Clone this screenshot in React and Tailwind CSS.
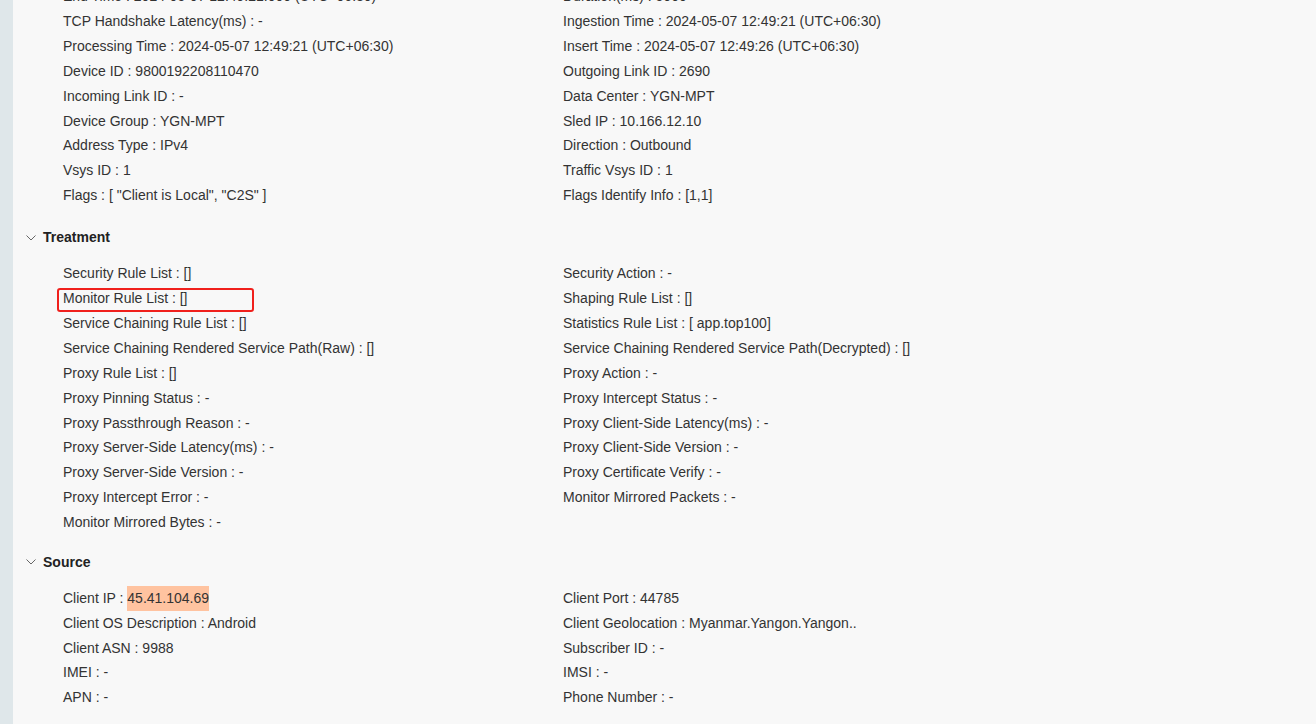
import React from "react";

const general = [
  ["End Time : 2024-05-07 12:49:21.000 (UTC+06:30)", "Duration(ms) : 5000"],
  ["TCP Handshake Latency(ms) : -", "Ingestion Time : 2024-05-07 12:49:21 (UTC+06:30)"],
  ["Processing Time : 2024-05-07 12:49:21 (UTC+06:30)", "Insert Time : 2024-05-07 12:49:26 (UTC+06:30)"],
  ["Device ID : 9800192208110470", "Outgoing Link ID : 2690"],
  ["Incoming Link ID : -", "Data Center : YGN-MPT"],
  ["Device Group : YGN-MPT", "Sled IP : 10.166.12.10"],
  ["Address Type : IPv4", "Direction : Outbound"],
  ["Vsys ID : 1", "Traffic Vsys ID : 1"],
  ['Flags : [ "Client is Local", "C2S" ]', "Flags Identify Info : [1,1]"],
];

const treatment = [
  ["Security Rule List : []", "Security Action : -"],
  ["Monitor Rule List : []", "Shaping Rule List : []"],
  ["Service Chaining Rule List : []", "Statistics Rule List : [ app.top100]"],
  ["Service Chaining Rendered Service Path(Raw) : []", "Service Chaining Rendered Service Path(Decrypted) : []"],
  ["Proxy Rule List : []", "Proxy Action : -"],
  ["Proxy Pinning Status : -", "Proxy Intercept Status : -"],
  ["Proxy Passthrough Reason : -", "Proxy Client-Side Latency(ms) : -"],
  ["Proxy Server-Side Latency(ms) : -", "Proxy Client-Side Version : -"],
  ["Proxy Server-Side Version : -", "Proxy Certificate Verify : -"],
  ["Proxy Intercept Error : -", "Monitor Mirrored Packets : -"],
  ["Monitor Mirrored Bytes : -", null],
];

const source = [
  ["__IP__", "Client Port : 44785"],
  ["Client OS Description : Android", "Client Geolocation : Myanmar.Yangon.Yangon.."],
  ["Client ASN : 9988", "Subscriber ID : -"],
  ["IMEI : -", "IMSI : -"],
  ["APN : -", "Phone Number : -"],
];

function Cell({ text }) {
  if (text === null) return <div className="h-[24.85px]" />;
  if (text === "__IP__") {
    return (
      <div className="h-[24.85px] leading-[24.85px] whitespace-nowrap">
        Client IP :{" "}
        <span className="inline-block bg-[#ffc3a0] h-[24.85px]">45.41.104.69</span>
      </div>
    );
  }
  if (text === "Monitor Rule List : []") {
    return (
      <div className="relative h-[24.85px] leading-[24.85px] whitespace-nowrap">
        {text}
        <span className="absolute left-[-6px] top-[1.5px] w-[197px] h-[24px] border-2 border-[#f0201c] rounded-[3px]" />
      </div>
    );
  }
  return <div className="h-[24.85px] leading-[24.85px] whitespace-nowrap">{text}</div>;
}

function Rows({ rows }) {
  return (
    <div className="grid grid-cols-[500px_500px] pl-[50px]">
      {rows.map(([a, b], i) => (
        <React.Fragment key={i}>
          <Cell text={a} />
          <Cell text={b} />
        </React.Fragment>
      ))}
    </div>
  );
}

function Heading({ title }) {
  return (
    <div className="flex items-center h-[28px] pl-[13px] gap-[7px]">
      <svg width="10" height="6" viewBox="0 0 10 6" className="shrink-0">
        <path d="M0.5 0.5 L5 5 L9.5 0.5" fill="none" stroke="#666" strokeWidth="1" />
      </svg>
      <span className="text-[14px] font-semibold text-[#222]">{title}</span>
    </div>
  );
}

export default function App() {
  return (
    <div
      className="flex w-[1316px] h-[724px] overflow-hidden bg-[#f8f8f8] text-[14px] text-[#333]"
      style={{ fontFamily: '"Liberation Sans", Arial, sans-serif' }}
    >
      <div className="w-[13px] shrink-0 bg-[#dfe7ea]" />
      <div className="flex-1 mt-[-15.6px]">
        <Rows rows={general} />
        <div className="mt-[15.9px]" />
        <Heading title="Treatment" />
        <div className="mt-[9.6px]" />
        <Rows rows={treatment} />
        <div className="mt-[13.6px]" />
        <Heading title="Source" />
        <div className="mt-[9.6px]" />
        <Rows rows={source} />
      </div>
    </div>
  );
}
